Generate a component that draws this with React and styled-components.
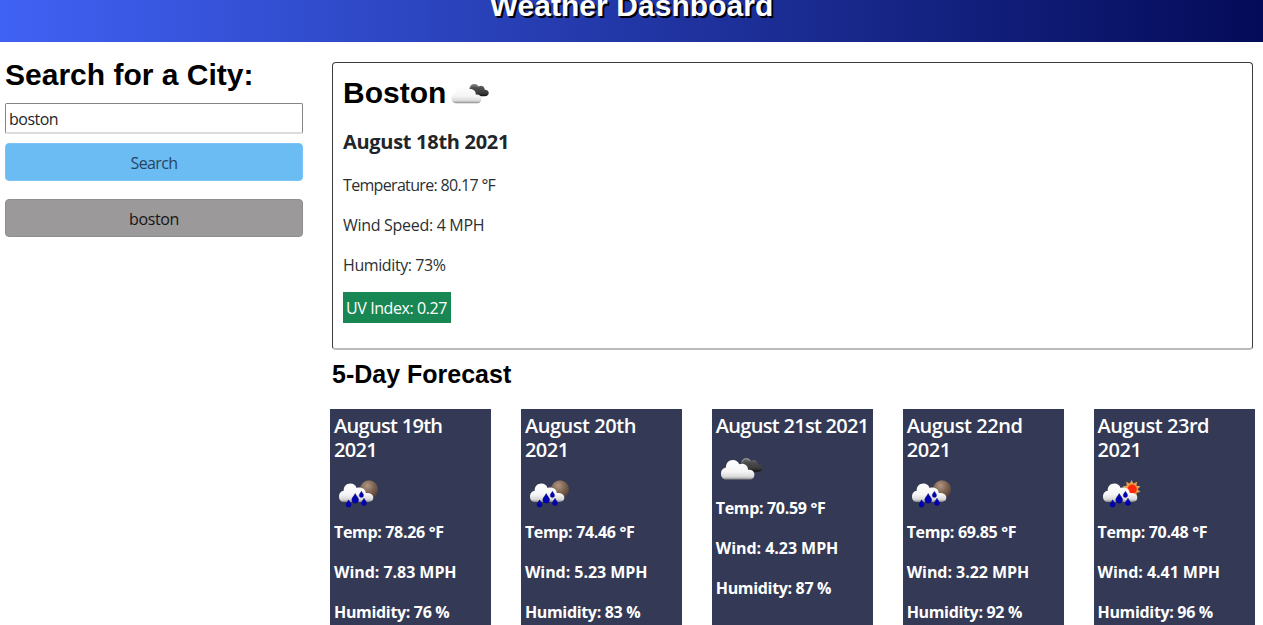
import React from "react";
import styled, { createGlobalStyle } from "styled-components";

const GlobalStyle = createGlobalStyle`
  * { box-sizing: border-box; }
  body {
    margin: 0;
    height: 625px;
    overflow: hidden;
    background: #fff;
    color: #2b2f33;
    font: 400 16px/24px "Open Sans", "Noto Sans", sans-serif;
  }
  h1, h2, h3, p { margin: 0; }
`;

const Page = styled.div`
  height: 625px;
  overflow: hidden;
`;

const Header = styled.header`
  height: 42px;
  display: flex;
  justify-content: center;
  align-items: flex-end;
  padding-bottom: 18px;
  background: linear-gradient(to right, #4062f4, #040b58);
`;

const Title = styled.h1`
  font: 700 30px/36px "Liberation Sans", Arial, sans-serif;
  letter-spacing: 0.05px;
  color: #fff;
  text-shadow: 2px 2px #000;
  white-space: nowrap;
`;

const Main = styled.main`
  display: grid;
  grid-template-columns: 298px 924.5px;
  column-gap: 27px;
  padding: 14px 0 0 5px;
`;

const Heading = styled.h2`
  font: 700 ${(p) => p.$size}px / ${(p) => p.$line}px "Liberation Sans", Arial, sans-serif;
  color: #000;
  white-space: nowrap;
`;

const SearchPanel = styled.section`
  display: flex;
  flex-direction: column;
`;

const SearchInput = styled.input`
  height: 31px;
  margin: 10px 0 9px;
  padding: 1px 3px 0;
  border: 1px solid #858585;
  border-bottom: 2px solid #dcdcdc;
  border-radius: 2px;
  outline: none;
  color: #212529;
  font: inherit;
  letter-spacing: -0.5px;
`;

const Button = styled.button`
  height: 38px;
  padding: 1px 0 0;
  border: 1px solid ${(p) => p.$border};
  border-radius: 4px;
  background: ${(p) => p.$fill};
  color: ${(p) => p.$color};
  font: inherit;
  letter-spacing: ${(p) => p.$spacing}px;
  margin-bottom: 18px;
`;

const Results = styled.section`
  min-width: 0;
`;

const Current = styled.article`
  width: 921px;
  height: 288px;
  margin: 6px 0 0 2px;
  padding: 9px 10px;
  border: 1px solid #3c3c3f;
  border-bottom: 2px solid #b9b9b9;
  border-radius: 4px;
`;

const CityRow = styled.div`
  display: flex;
  align-items: flex-start;
  height: 45px;
`;

const CurrentDate = styled.h3`
  font-weight: 700;
  font-size: 20px;
  line-height: 24px;
  letter-spacing: -0.3px;
  margin: 13px 0 19px;
  color: #212529;
`;

const Stat = styled.p`
  margin-bottom: 16px;
  letter-spacing: ${(p) => p.$spacing}px;
  font-weight: ${(p) => (p.$bold ? 700 : 400)};
  white-space: nowrap;
`;

const UvBadge = styled.span`
  display: inline-flex;
  align-items: center;
  justify-content: center;
  width: 108px;
  height: 31px;
  margin-top: -1px;
  padding: 1px 1px 0 0;
  background: #198754;
  color: #fff;
  letter-spacing: -0.42px;
`;

const ForecastTitle = styled.div`
  margin: 8px 0 19px 2px;
`;

const Forecast = styled.div`
  display: flex;
  justify-content: space-between;
`;

const Card = styled.article`
  width: 161px;
  height: 240px;
  padding: 5px 4px;
  background: #343a55;
  color: #fff;
`;

const CardDate = styled.h3`
  font-weight: 600;
  font-size: 20px;
  line-height: 24px;
  letter-spacing: ${(p) => p.$spacing}px;
  white-space: ${(p) => (p.$single ? "nowrap" : "normal")};
  padding-right: ${(p) => (p.$single ? 0 : 10)}px;
  margin-bottom: 9px;
`;

const IconSvg = styled.svg`
  display: block;
  flex: none;
  width: ${(p) => p.$size}px;
  height: ${(p) => p.$size}px;
  margin: ${(p) => (p.$inline ? "2px 0 0 1px" : "0 0 -1px")};
`;

const Drop = ({ x, y, s = 1 }) => (
  <path
    transform={`translate(${x} ${y}) scale(${s})`}
    d="M0-4C.8-2.2 2.6-.8 2.6.8A2.6 2.6 0 0 1-2.6.8C-2.6-.8-.8-2.2 0-4Z"
    fill="#0000b4"
    stroke="#10106a"
    strokeWidth=".4"
  />
);

const SunRays = () => {
  const pts = Array.from({ length: 20 }, (_, i) => {
    const r = i % 2 ? 6 : 9.3;
    const a = (i * Math.PI) / 10 - Math.PI / 2;
    return `${33.6 + r * Math.cos(a)},${18.2 + r * Math.sin(a)}`;
  }).join(" ");
  return (
    <>
      <polygon points={pts} fill="#e8a04c" />
      <circle cx="34.2" cy="18.2" r="4.6" fill="#ff2a0c" />
    </>
  );
};

const WeatherIcon = ({ kind, id, size = 50, inline }) => (
  <IconSvg viewBox="0 0 50 50" $size={size} $inline={inline}>
    <defs>
      <linearGradient id={`${id}-w`} x1="0" y1="0" x2="0" y2="1">
        <stop offset="0" stopColor="#fff" />
        <stop offset=".6" stopColor="#f5f5f5" />
        <stop offset=".86" stopColor="#d8d8d8" />
        <stop offset="1" stopColor="#868686" />
      </linearGradient>
      <linearGradient id={`${id}-d`} x1="0" y1="0" x2="0" y2="1">
        <stop offset="0" stopColor="#777" />
        <stop offset=".35" stopColor="#4c4c4c" />
        <stop offset=".75" stopColor="#3b3b3b" />
        <stop offset="1" stopColor="#101010" />
      </linearGradient>
      <radialGradient id={`${id}-m`} cx=".4" cy=".3" r=".7">
        <stop offset="0" stopColor="#b09683" />
        <stop offset=".6" stopColor="#79604e" />
        <stop offset="1" stopColor="#594337" />
      </radialGradient>
    </defs>
    {kind === "clouds" && (
      <>
        <path
          d="M25 17C25 13 27.5 11 30.5 11C33 11 34.5 12.5 35.2 14C38.5 11.8 41.5 14 42 17.5C45 17.6 46.4 19.3 46.4 21.2C46.4 23.5 44.5 24.7 42 24.7H34C28 24.7 25 21 25 17Z"
          fill={`url(#${id}-d)`}
        />
        <path d="M26 15.2C27 11.2 32 10.6 34 14" fill="none" stroke="#999" strokeWidth="1" />
        <path
          d="M10 32.6C6.8 32.6 5 29.9 5 26.8C5 23.4 7.2 21 10 20.6C9.8 16 12.8 13 16.8 13C20 13 22.3 14.8 23.2 17.3C27.7 15.5 32.2 18.3 32 22.8C36 22.5 38.4 24.6 38.4 27.6C38.4 30.6 36.4 32.6 33.7 32.6Z"
          fill={`url(#${id}-w)`}
        />
      </>
    )}
    {kind !== "clouds" && (
      <>
        {kind === "night" ? (
          <circle cx="35" cy="18.3" r="9" fill={`url(#${id}-m)`} />
        ) : (
          <SunRays />
        )}
        <path
          d="M10 31C6.8 31 5 28.6 5 25.4C5 22 7.2 20 9.7 19.7C9.5 15.4 12.5 12.6 16.3 12.6C19.5 12.6 21.7 14.2 22.6 17C27 15.6 31.8 18 31.7 22C36.5 21.7 39.3 23.5 39.3 26.6C39.3 29.5 37.5 31 34.6 31Z"
          fill={`url(#${id}-w)`}
        />
        <Drop x={14.6} y={32.8} />
        <Drop x={21.2} y={27.8} s={1.3} />
        <Drop x={27.4} y={23.6} s={0.85} />
        <Drop x={30} y={31.2} />
      </>
    )}
  </IconSvg>
);

const days = [
  { date: "August 19th 2021", icon: "night", temp: "78.26", wind: "7.83", humidity: 76, spacing: -0.7 },
  { date: "August 20th 2021", icon: "night", temp: "74.46", wind: "5.23", humidity: 83, spacing: -0.45 },
  { date: "August 21st 2021", icon: "clouds", temp: "70.59", wind: "4.23", humidity: 87, spacing: -0.7, single: true },
  { date: "August 22nd 2021", icon: "night", temp: "69.85", wind: "3.22", humidity: 92, spacing: -0.42 },
  { date: "August 23rd 2021", icon: "day", temp: "70.48", wind: "4.41", humidity: 96, spacing: -0.45 },
];

export default function App() {
  return (
    <Page>
      <GlobalStyle />
      <Header>
        <Title>Weather Dashboard</Title>
      </Header>
      <Main>
        <SearchPanel>
          <Heading $size={30} $line={37}>Search for a City:</Heading>
          <SearchInput defaultValue="boston" />
          <Button $fill="#6cbcf4" $border="#79c3f6" $color="#26445c" $spacing={-0.6}>Search</Button>
          <Button $fill="#9b9999" $border="#8b8e92" $color="#151515" $spacing={-0.4}>boston</Button>
        </SearchPanel>
        <Results>
          <Current>
            <CityRow>
              <Heading $size={30} $line={41}>Boston</Heading>
              <WeatherIcon kind="clouds" id="now" size={45} inline />
            </CityRow>
            <CurrentDate>August 18th 2021</CurrentDate>
            <Stat $spacing={-0.67}>Temperature: 80.17 °F</Stat>
            <Stat $spacing={-0.3}>Wind Speed: 4 MPH</Stat>
            <Stat $spacing={-0.4}>Humidity: 73%</Stat>
            <UvBadge>UV Index: 0.27</UvBadge>
          </Current>
          <ForecastTitle>
            <Heading $size={25} $line={32}>5-Day Forecast</Heading>
          </ForecastTitle>
          <Forecast>
            {days.map((d, i) => (
              <Card key={d.date}>
                <CardDate $spacing={d.spacing} $single={d.single}>{d.date}</CardDate>
                <WeatherIcon kind={d.icon} id={`day${i}`} />
                <Stat $bold $spacing={-0.33}>Temp: {d.temp} °F</Stat>
                <Stat $bold $spacing={-0.05}>Wind: {d.wind} MPH</Stat>
                <Stat $bold $spacing={-0.33}>Humidity: {d.humidity} %</Stat>
              </Card>
            ))}
          </Forecast>
        </Results>
      </Main>
    </Page>
  );
}
